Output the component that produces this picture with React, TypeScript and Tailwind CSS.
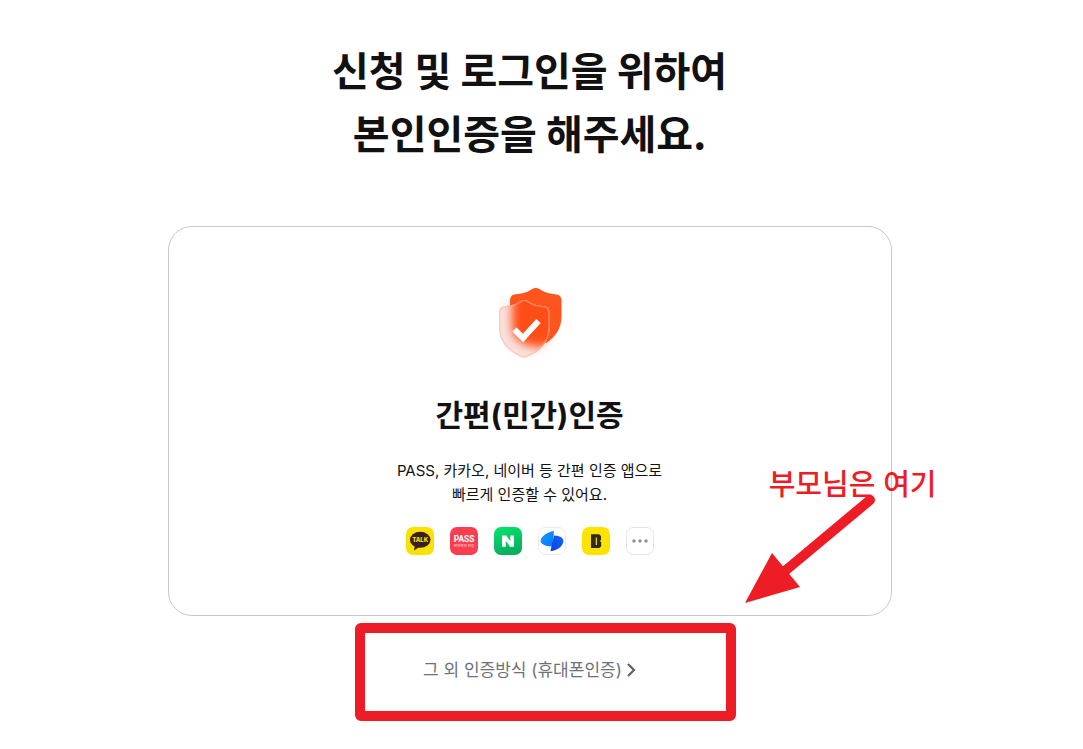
import React from 'react';

const TalkIcon: React.FC = () => (
  <svg viewBox="0 0 28 28" className="h-7 w-7" role="img" aria-label="카카오톡">
    <rect width="28" height="28" rx="7" fill="#fae100" />
    <ellipse cx="14.2" cy="12.8" rx="10.3" ry="8" fill="#3b1e1e" />
    <path d="M9 18 L8 23.6 L14 19.5 Z" fill="#3b1e1e" />
    <text x="14.2" y="15.2" textAnchor="middle" fontSize="6" fontWeight="800" fontFamily="Inter, sans-serif" fill="#fae100">
      TALK
    </text>
  </svg>
);

const PassIcon: React.FC = () => (
  <svg viewBox="0 0 28 28" className="h-7 w-7" role="img" aria-label="PASS">
    <rect width="28" height="28" rx="7" fill="#fb3e4f" />
    <text x="14" y="14.6" textAnchor="middle" fontSize="8.4" fontWeight="700" fontFamily="'Liberation Sans Narrow', Roboto, sans-serif" fill="#fff">
      PASS
    </text>
    <text x="14" y="20.2" textAnchor="middle" fontSize="3.6" fontWeight="500" fontFamily="'Noto Sans CJK KR', sans-serif" fill="#ffd5d8">
      본인확인 인증
    </text>
  </svg>
);

const NaverIcon: React.FC = () => (
  <svg viewBox="0 0 28 28" className="h-7 w-7" role="img" aria-label="네이버">
    <defs>
      <linearGradient id="naver" x1="0" y1="0" x2="0.3" y2="1">
        <stop offset="0" stopColor="#05e56c" />
        <stop offset="1" stopColor="#0aae60" />
      </linearGradient>
    </defs>
    <rect width="28" height="28" rx="7" fill="url(#naver)" />
    <path d="M8 8.5h4.3l4 5.7V8.500H20v11.300h-4l-4.200-6v6H8Z" fill="#fff" />
  </svg>
);

const TossIcon: React.FC = () => (
  <svg viewBox="0 0 28 28" className="h-7 w-7" role="img" aria-label="토스">
    <defs>
      <linearGradient id="tossLeft" x1="0" y1="0" x2="1" y2="1">
        <stop offset="0" stopColor="#159bff" />
        <stop offset="1" stopColor="#0878fa" />
      </linearGradient>
      <linearGradient id="tossRight" x1="1" y1="0" x2="0" y2="1">
        <stop offset="0" stopColor="#1068ff" />
        <stop offset="1" stopColor="#0b3de5" />
      </linearGradient>
    </defs>
    <rect x="0.5" y="0.5" width="27" height="27" rx="7" fill="#fff" stroke="#e8ebee" />
    <path d="M15.7 4C9 5.2 2.7 9.5 2.7 14c0 3.2 4.6 5.2 10.800 5.600.8-5 3-10 2.200-15.600Z" fill="url(#tossLeft)" />
    <path d="M16.2 8.5c5.3.3 9.2 2 9.2 5.400 0 5-6 9.500-12.900 10.300.5-2.200.8-3.800 1-5.600.4-3.900 2-6.600 2.700-10.100Z" fill="url(#tossRight)" />
  </svg>
);

const KbIcon: React.FC = () => (
  <svg viewBox="0 0 28 28" className="h-7 w-7" role="img" aria-label="국민은행">
    <rect width="28" height="28" rx="7" fill="#ffe300" />
    <path
      fillRule="evenodd"
      d="M9 7.3h8.200l1.800 1.800v3.800L17.900 14l1.300 1.200v4L17.400 21H9Zm4.700 3.200v7.500h1.200v-7.500Z"
      fill="#2b2a1c"
    />
  </svg>
);

const MoreIcon: React.FC = () => (
  <svg viewBox="0 0 28 28" className="h-7 w-7" role="img" aria-label="더보기">
    <rect x="0.5" y="0.5" width="27" height="27" rx="7" fill="#fff" stroke="#e2e5e8" />
    <circle cx="8" cy="14" r="1.7" fill="#8a8f96" />
    <circle cx="14" cy="14" r="1.7" fill="#8a8f96" />
    <circle cx="20" cy="14" r="1.7" fill="#8a8f96" />
  </svg>
);

const providers = [TalkIcon, PassIcon, NaverIcon, TossIcon, KbIcon, MoreIcon];

const FRONT_SHIELD =
  'M31 18.8c2-1.200 4.500-1.200 6.500 0 5 3.500 9 4.700 15.500 5.200 4.500.4 6.500 2.400 6.500 6.500v15.500c0 13.500-9 23.500-22.500 29.200-1.900.8-3.600.8-5.500 0C18 69.500 9 59.500 9 46V30.500c0-4.100 2-6.100 6.500-6.500 6.500-.5 10.500-1.700 15.500-5.200Z';

const ShieldIcon: React.FC = () => (
  <svg viewBox="0 0 80 80" className="h-20 w-20" aria-hidden="true">
    <defs>
      <clipPath id="front">
        <path d={FRONT_SHIELD} />
      </clipPath>
      <filter id="blur" x="-50%" y="-50%" width="200%" height="200%">
        <feGaussianBlur stdDeviation="5" />
      </filter>
    </defs>
    <path d="M14 22h8v30h40c-3 10-12 16-24 17H26Z" fill="#ff5a1f" opacity="0.3" filter="url(#blur)" />
    <path
      d="M42.5 6.8c2-1.100 4.600-1.100 6.600 0 5.200 3.600 9.400 4.900 15.500 5.400 4.800.3 6.900 2.400 6.900 6.800v15c0 12.500-6 21-15.500 27L20 45V18.500c0-4 2-6 6-6.300 7-.5 11.500-1.800 16.500-5.400Z"
      fill="#fe541e"
    />
    <g clipPath="url(#front)">
      <rect x="5" y="15" width="60" height="65" fill="#f8e2df" />
      <path d="M22 10h52v33c0 13-9 22-23 22C34 65 22 58 22 44Z" fill="#ff4d17" filter="url(#blur)" />
      <path d={FRONT_SHIELD} fill="none" stroke="#ffb199" strokeWidth="3" opacity="0.45" />
    </g>
    <path d="M24.500 47.500l8.500 8.500L48.500 39" fill="none" stroke="#fff" strokeWidth="6" />
  </svg>
);

const App: React.FC = () => {
  return (
    <div className="min-h-screen bg-white pr-6 font-[Inter,'Noto_Sans_CJK_KR',sans-serif] text-[#111]">
      <main className="mx-auto max-w-[724px] pt-[38px]">
        <h1 className="text-center font-['Noto_Sans_CJK_KR',sans-serif] text-[40px] leading-[63px] font-bold">
          신청 및 로그인을 위하여
          <br />
          본인인증을 해주세요.
        </h1>

        <section className="relative mt-[62px] flex flex-col items-center rounded-3xl border border-[#c9c9cb] pt-[55px] pb-[60px]">
          <ShieldIcon />
          <h2 className="mt-[29px] text-[30px] leading-[48px] font-bold">간편(민간)인증</h2>
          <p className="mt-5 text-center text-[15px] leading-6">
            PASS, 카카오, 네이버 등 간편 인증 앱으로
            <br />
            빠르게 인증할 수 있어요.
          </p>
          <ul className="mt-5 flex gap-4">
            {providers.map((Icon, index) => (
              <li key={index}>
                <Icon />
              </li>
            ))}
          </ul>

          <div className="absolute right-[-46px] bottom-[11px] flex w-[192px] flex-col text-[#ee1c25]">
            <span className="self-end text-[29px] leading-8 font-medium whitespace-nowrap">부모님은 여기</span>
            <svg viewBox="0 0 192 110" className="-mt-[7px] h-[110px] w-[192px]" aria-hidden="true">
              <path d="M125 6 L40 77" stroke="currentColor" strokeWidth="10" strokeLinecap="round" />
              <path d="M0 109 L27 59 L55 93 Z" fill="currentColor" />
            </svg>
          </div>
        </section>

        <div className="relative mt-[7px] flex h-[98px] items-center justify-center">
          <a href="#phone" className="flex items-center gap-1 pb-1 text-[17px] leading-6 text-[#6d7278]">
            그 외 인증방식 (휴대폰인증)
            <svg viewBox="0 0 10 16" className="h-4 w-[10px]" aria-hidden="true">
              <path d="M2 2l6 6-6 6" fill="none" stroke="#5c6167" strokeWidth="2.2" />
            </svg>
          </a>
          <div className="pointer-events-none absolute inset-y-0 right-[156px] left-[187px] rounded-md border-10 border-[#ee1c25]" />
        </div>
      </main>
    </div>
  );
};

export default App;
